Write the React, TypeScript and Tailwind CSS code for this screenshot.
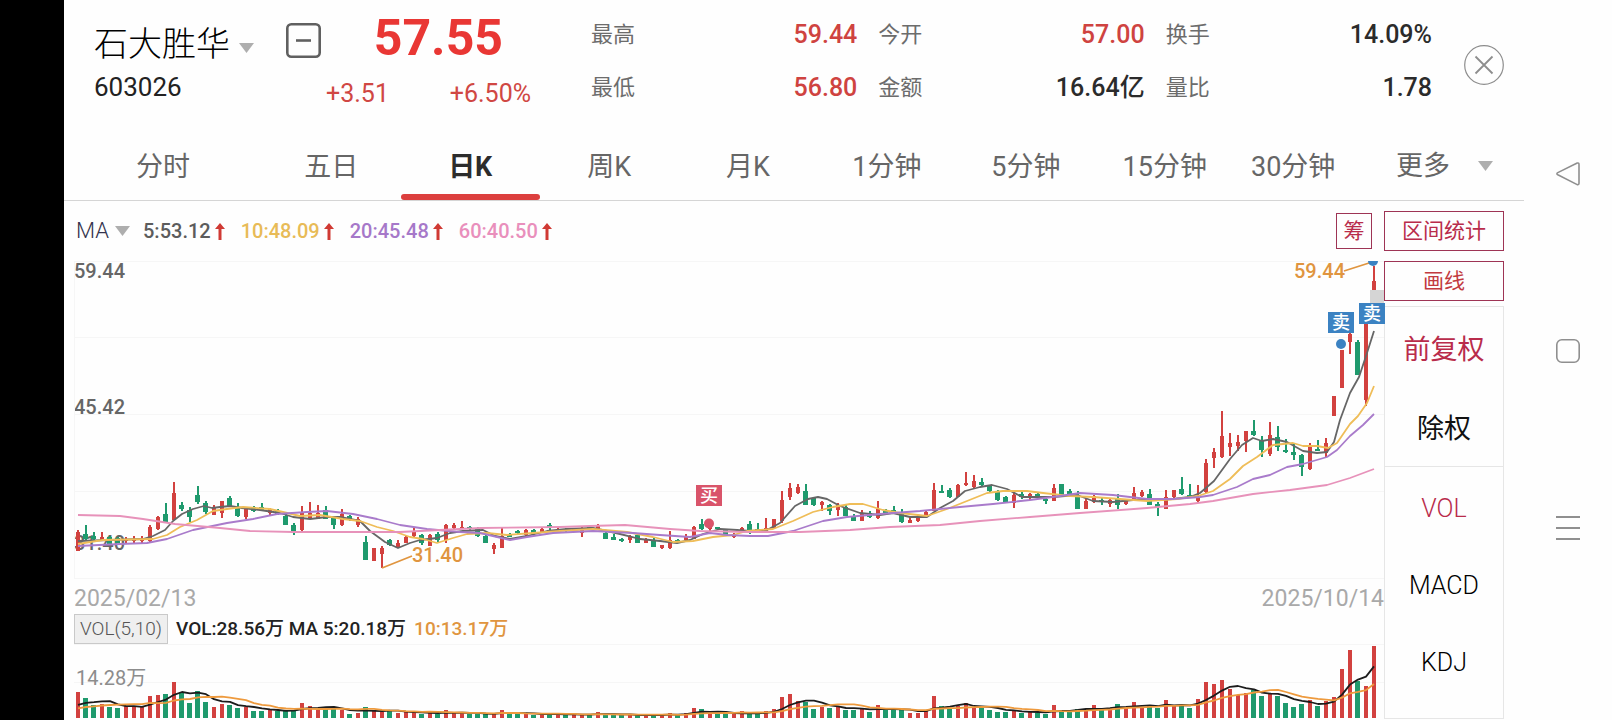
import clsx from "clsx";

type Candle = [string, number, number, number, number, number];

// colour, high, body top, body bottom, low, volume
const candles: Candle[] = [
  ["r", 530, 532, 551, 551, 26], ["g", 525, 534, 539, 540, 20], ["g", 532, 536, 539, 541, 13], ["r", 532, 537, 541, 541, 14],
  ["g", 536, 537, 544, 544, 11], ["g", 537, 538, 543, 543, 10], ["r", 537, 539, 541, 543, 12], ["r", 536, 539, 540, 543, 12],
  ["r", 536, 539, 541, 543, 11], ["r", 525, 527, 541, 542, 22], ["r", 516, 517, 529, 530, 23], ["g", 503, 514, 522, 522, 24],
  ["r", 482, 493, 520, 520, 36], ["g", 502, 505, 509, 511, 25], ["g", 507, 510, 517, 522, 15], ["g", 486, 495, 502, 504, 27],
  ["g", 501, 503, 512, 514, 16], ["r", 505, 508, 515, 515, 11], ["r", 501, 501, 513, 518, 14], ["g", 496, 498, 506, 507, 13],
  ["g", 503, 507, 516, 517, 10], ["r", 508, 509, 517, 519, 11], ["g", 506, 507, 511, 512, 7], ["g", 503, 507, 510, 511, 7],
  ["r", 508, 509, 513, 516, 8], ["g", 509, 511, 514, 515, 7], ["g", 514, 516, 525, 525, 7], ["g", 523, 525, 531, 535, 8],
  ["r", 506, 513, 530, 531, 15], ["r", 502, 513, 518, 518, 12], ["r", 505, 513, 519, 519, 8], ["g", 506, 510, 519, 519, 11],
  ["g", 517, 518, 525, 529, 9], ["r", 509, 514, 525, 526, 8], ["g", 515, 516, 519, 521, 4], ["r", 517, 519, 525, 527, 5],
  ["g", 536, 542, 560, 560, 11], ["r", 548, 548, 561, 561, 8], ["r", 546, 548, 554, 568, 6], ["g", 539, 540, 545, 546, 7],
  ["r", 540, 543, 547, 548, 5], ["r", 536, 537, 543, 543, 6], ["r", 528, 531, 536, 537, 6], ["g", 534, 535, 543, 545, 4],
  ["r", 534, 535, 546, 546, 5], ["g", 532, 534, 540, 542, 4], ["r", 524, 525, 540, 543, 8], ["r", 523, 525, 528, 529, 5],
  ["r", 521, 527, 529, 529, 5], ["g", 526, 527, 529, 531, 4], ["g", 527, 529, 536, 537, 4], ["g", 533, 536, 543, 543, 4],
  ["r", 543, 545, 549, 554, 4], ["r", 528, 536, 548, 548, 8], ["g", 533, 534, 537, 537, 4], ["g", 530, 531, 533, 534, 4],
  ["r", 529, 530, 535, 536, 4], ["g", 529, 530, 533, 535, 3], ["r", 528, 529, 533, 533, 5], ["g", 523, 525, 527, 530, 3],
  ["r", 528, 529, 531, 532, 4], ["g", 528, 529, 531, 532, 3], ["r", 528, 529, 531, 531, 3], ["r", 527, 529, 533, 537, 4],
  ["g", 527, 527, 529, 530, 3], ["r", 524, 526, 529, 529, 6], ["g", 531, 533, 539, 539, 3], ["g", 534, 537, 540, 540, 3],
  ["g", 538, 539, 541, 542, 3], ["r", 535, 536, 540, 543, 3], ["g", 534, 535, 543, 543, 3], ["r", 538, 539, 543, 543, 3],
  ["g", 537, 540, 547, 547, 3], ["r", 545, 545, 548, 549, 3], ["r", 531, 540, 548, 549, 5], ["g", 539, 540, 542, 542, 3],
  ["r", 534, 537, 540, 541, 5], ["r", 526, 527, 539, 539, 10], ["g", 519, 524, 529, 530, 9], ["r", 526, 527, 529, 531, 4],
  ["g", 527, 527, 529, 530, 4], ["g", 529, 530, 535, 535, 4], ["r", 533, 535, 537, 538, 4], ["r", 527, 528, 532, 533, 7],
  ["g", 521, 524, 531, 534, 4], ["g", 523, 529, 531, 532, 4], ["r", 518, 528, 531, 532, 7], ["r", 519, 519, 528, 529, 9],
  ["r", 491, 500, 521, 523, 21], ["r", 483, 488, 497, 500, 24], ["r", 484, 487, 493, 494, 17], ["g", 484, 491, 505, 505, 16],
  ["g", 497, 498, 505, 506, 9], ["r", 501, 502, 505, 511, 11], ["g", 504, 505, 511, 515, 10], ["r", 503, 505, 510, 516, 12],
  ["g", 505, 507, 516, 516, 8], ["g", 514, 517, 521, 521, 8], ["r", 510, 513, 521, 521, 9], ["g", 511, 513, 517, 518, 6],
  ["r", 501, 509, 518, 519, 13], ["g", 509, 510, 513, 514, 8], ["g", 506, 510, 513, 513, 8], ["g", 509, 513, 522, 523, 8],
  ["r", 517, 520, 523, 523, 5], ["r", 515, 517, 521, 522, 5], ["r", 511, 512, 516, 517, 8], ["r", 483, 490, 511, 511, 22],
  ["g", 485, 491, 492, 493, 12], ["g", 488, 490, 497, 498, 10], ["r", 484, 485, 497, 497, 12], ["r", 472, 483, 485, 486, 15],
  ["r", 475, 481, 487, 488, 11], ["g", 478, 482, 485, 487, 10], ["g", 485, 485, 491, 492, 8], ["g", 490, 492, 500, 501, 6],
  ["g", 496, 497, 502, 502, 6], ["r", 493, 495, 503, 508, 8], ["g", 490, 494, 497, 499, 5], ["r", 493, 494, 498, 500, 6],
  ["g", 492, 494, 498, 499, 5], ["g", 497, 499, 501, 504, 4], ["r", 484, 488, 501, 501, 13], ["g", 484, 484, 495, 495, 7],
  ["g", 489, 491, 494, 495, 7], ["g", 491, 495, 509, 509, 9], ["r", 499, 501, 509, 509, 9], ["r", 495, 496, 502, 503, 13],
  ["g", 498, 500, 502, 505, 8], ["r", 498, 500, 504, 507, 10], ["g", 494, 499, 505, 509, 14], ["r", 499, 501, 504, 505, 10],
  ["r", 487, 493, 499, 499, 16], ["r", 490, 492, 496, 497, 11], ["g", 489, 494, 505, 505, 12], ["g", 502, 504, 507, 516, 10],
  ["r", 490, 497, 509, 509, 18], ["r", 490, 490, 497, 498, 12], ["g", 477, 489, 494, 495, 13], ["g", 484, 495, 497, 497, 10],
  ["r", 485, 497, 501, 502, 19], ["r", 459, 463, 492, 493, 36], ["r", 448, 452, 458, 468, 34], ["r", 411, 436, 457, 458, 38],
  ["r", 433, 443, 447, 456, 29], ["r", 435, 442, 446, 451, 23], ["r", 431, 431, 441, 452, 25], ["g", 420, 431, 435, 436, 28],
  ["g", 436, 440, 450, 457, 22], ["r", 422, 435, 454, 456, 24], ["g", 426, 437, 447, 451, 22], ["g", 439, 450, 452, 453, 15],
  ["g", 443, 452, 455, 460, 11], ["g", 454, 455, 467, 476, 14], ["r", 443, 445, 469, 470, 18], ["g", 440, 449, 451, 451, 12],
  ["r", 438, 443, 453, 457, 17], ["r", 396, 396, 416, 416, 21], ["r", 350, 350, 388, 388, 49], ["r", 333, 334, 342, 354, 68],
  ["g", 340, 342, 375, 375, 37], ["r", 320, 324, 400, 406, 32], ["r", 266, 281, 290, 290, 72],
];

const ma5 =
  "78,541 110,540 143,539 153,536 165,530 173,521 182,514 193,509 204,506 212,508 220,507 230,506 242,508 260,510 280,513 293,517 310,519 327,517 340,517 360,521 370,531 385,542 398,548 410,543 420,540 437,538 450,533 463,531 483,530 495,536 510,539 527,536 547,531 567,529 593,528 607,531 620,534 640,539 660,541 677,543 690,540 703,534 720,529 737,530 750,531 767,530 780,523 795,506 808,499 818,497 827,499 840,506 860,513 880,515 893,513 910,517 927,517 940,508 953,501 965,491 980,487 992,485 1007,489 1022,497 1033,497 1053,497 1077,495 1093,501 1113,502 1133,500 1153,500 1173,499 1190,497 1200,493 1214,481 1230,459 1242,445 1253,438 1262,441 1273,439 1287,442 1303,451 1317,453 1327,452 1334,442 1340,420 1350,393 1359,377 1367,353 1374,331";
const ma10 =
  "78,544 103,540 153,539 167,535 180,527 197,520 213,511 227,509 243,507 270,509 283,512 300,516 320,515 343,519 360,521 377,527 393,531 410,537 423,539 437,543 453,538 467,534 487,533 507,535 533,533 560,531 593,529 627,532 653,537 673,542 693,541 713,537 733,535 747,531 773,529 793,521 813,512 833,507 850,504 863,504 883,510 900,513 927,516 947,509 967,501 987,493 1003,491 1027,491 1043,493 1070,496 1093,497 1120,499 1147,501 1177,499 1198,496 1213,491 1230,479 1243,466 1257,457 1273,445 1293,443 1303,446 1317,446 1328,448 1337,443 1350,424 1358,416 1367,403 1374,386";
const ma20 =
  "78,546 120,544 147,543 167,539 193,530 227,523 253,519 277,514 307,512 327,511 353,514 377,519 400,525 427,529 460,532 480,533 510,540 527,537 553,533 593,531 633,533 660,535 690,537 710,533 727,535 750,536 768,536 793,531 823,521 847,517 880,514 920,511 960,507 993,504 1030,500 1060,496 1080,493 1113,495 1147,499 1173,499 1200,497 1213,495 1237,487 1253,479 1270,475 1287,467 1303,464 1327,457 1337,450 1350,436 1363,425 1374,414";
const ma60 =
  "78,515 120,516 143,519 175,524 220,528 250,531 293,532 400,532 440,530 480,528 560,527 590,526 625,525 670,529 700,531 750,532 800,532 850,530 890,527 940,525 980,521 1030,517 1080,513 1147,508 1190,504 1213,501 1253,494 1290,490 1327,485 1350,478 1374,469";

const averages = [
  { label: "5:53.12", className: "text-[#5c5c5c]" },
  { label: "10:48.09", className: "text-[#e8bb57]" },
  { label: "20:45.48", className: "text-[#a678c9]" },
  { label: "60:40.50", className: "text-[#e98fbc]" },
];

const stats = [
  { label: "最高", value: "59.44", up: true },
  { label: "今开", value: "57.00", up: true },
  { label: "换手", value: "14.09%", up: false },
  { label: "最低", value: "56.80", up: true },
  { label: "金额", value: "16.64亿", up: false },
  { label: "量比", value: "1.78", up: false },
];

const tabs = ["分时", "五日", "日K", "周K", "月K", "1分钟", "5分钟", "15分钟", "30分钟"];

const RED = "#d2413f";
const GREEN = "#1f9a6d";

const candleX = (i: number) => 78 + i * 8;
const color = (kind: string) => (kind === "r" ? RED : GREEN);

// volumes of the sessions before the first visible one
const earlier = [6, 6, 6, 6, 6, 10, 10, 10, 10];
const volumes = [...earlier, ...candles.map((c) => c[5])];

const volumeAverage = (days: number) =>
  candles
    .map((_, i) => {
      const end = i + earlier.length + 1;
      const sum = volumes.slice(end - days, end).reduce((a, b) => a + b, 0);
      return `${candleX(i)},${718 - sum / days}`;
    })
    .join(" ");

const Caret = () => (
  <svg viewBox="0 0 15 10" className="w-[15px] h-[10px] pointer-events-none" aria-hidden="true">
    <path d="M0 0H15L7.5 10Z" fill="#aeaeae" />
  </svg>
);

const UpArrow = () => (
  <svg viewBox="0 0 10 17" className="w-[10px] h-[17px]" aria-hidden="true">
    <path d="M5 0L10 6H6.5V17H3.5V6H0Z" fill="#d03a34" />
  </svg>
);

const Header = () => (
  <header className="flex h-[132px] pl-[30px] pr-[20px]">
    <div className="w-[192px] pt-[20px]">
      <div className="flex items-center gap-[9px] h-12">
        <select aria-label="股票" className="appearance-none text-[34px] leading-[48px] font-light text-black">
          <option>石大胜华</option>
        </select>
        <span className="pt-2">
          <Caret />
        </span>
      </div>
      <p className="text-[26px] leading-[38px] text-[#222]">603026</p>
    </div>
    <button aria-label="删除自选" className="mt-[23px] w-[35px] h-[35px] shrink-0">
      <svg viewBox="0 0 35 35" fill="none" stroke="#606060">
        <rect x="1.3" y="1.3" width="32.4" height="32.4" rx="4" strokeWidth="2.6" />
        <path d="M10 17.5H25" strokeWidth="2.6" />
      </svg>
    </button>
    <div className="ml-[5px] mr-[60px] w-[205px] pt-[10px] shrink-0">
      <p className="text-[50px] leading-[56px] font-bold text-[#e93734] text-right pr-[28px]">57.55</p>
      <p className="flex justify-between text-[25px] leading-[56px] text-[#d04743]">
        <span>+3.51</span>
        <span>+6.50%</span>
      </p>
    </div>
    <dl className="flex-1 grid grid-cols-3 gap-x-[21px] pt-2 content-start">
      {stats.map((item) => (
        <div key={item.label} className="flex justify-between items-center h-[53px]">
          <dt className="text-[22px] text-[#6c6c6c]">{item.label}</dt>
          <dd className={clsx("text-[25px] font-medium", item.up ? "text-[#cf4340]" : "text-[#2b2b2b]")}>{item.value}</dd>
        </div>
      ))}
    </dl>
    <button aria-label="关闭" className="ml-[32px] mt-[45px] w-10 h-10 shrink-0">
      <svg viewBox="0 0 40 40" fill="none" stroke="#8d8d8d">
        <circle cx="20" cy="20" r="19.3" strokeWidth="1.2" />
        <path d="M11.5 11.5L28.5 28.5M28.5 11.5L11.5 28.5" strokeWidth="1.8" />
      </svg>
    </button>
  </header>
);

const Tabs = () => (
  <nav className="grid grid-cols-[198fr_repeat(7,139fr)_118fr_172fr] h-[69px] border-b border-[#d5d5d5] text-[27px] text-[#666]">
    {tabs.map((tab) => (
      <button key={tab} className={clsx("flex flex-col items-center", tab === "日K" && "font-bold text-[#2c2c2c]")}>
        <span className="h-[62px] leading-[70px] whitespace-nowrap">{tab}</span>
        {tab === "日K" && <span className="h-[6px] w-full rounded-full bg-[#dc3f3e]" />}
      </button>
    ))}
    <div className="flex items-center gap-[28px] pl-[44px]">
      <select aria-label="更多周期" className="appearance-none">
        <option>更多</option>
      </select>
      <Caret />
    </div>
  </nav>
);

const Marker = ({ x, y, text, buy = false }: { x: number; y: number; text: string; buy?: boolean }) => (
  <span
    className={clsx("absolute h-[21px] w-[26px] text-center text-[18px] leading-[21px] text-white", buy ? "bg-[#d9546a]" : "bg-[#3b82c2]")}
    style={{ left: `${((x - 74) / 1310) * 100}%`, top: y - 261 }}
  >
    {text}
  </span>
);

const PriceChart = () => (
  <div className="relative h-[318px] text-xl leading-6 font-medium">
    <span className="absolute left-0 -top-[2px] text-[#666]">59.44</span>
    <span className="absolute left-0 top-[134px] text-[#666]">45.42</span>
    <span className="absolute left-0 top-[270px] text-[#666]">31.40</span>
    <svg viewBox="74 261 1310 318" preserveAspectRatio="none" className="absolute inset-0 w-full h-full" fill="none" role="img" aria-label="日K线">
      <path d="M74 261.5H1384M74 337.5H1384M74 414.5H1384M74 491.5H1384M74 578.5H1384M74.5 261V579" stroke="#f6f6f6" />
      {candles.map(([kind, high, top, bottom, low], i) => (
        <g key={i} fill={color(kind)}>
          <rect x={candleX(i) - 1} y={high} width="2" height={low - high} />
          <rect x={candleX(i) - (kind === "r" ? 2 : 3)} y={top} width={kind === "r" ? 4 : 5} height={Math.max(bottom - top, 2)} />
        </g>
      ))}
      <g strokeWidth="1.8" strokeLinejoin="round">
        <polyline points={ma5} stroke="#666" />
        <polyline points={ma10} stroke="#efbd58" />
        <polyline points={ma20} stroke="#a97bcb" />
        <polyline points={ma60} stroke="#e792ba" />
        <path d="M382 568L412 556M1344 271L1369 263" stroke="#e0953f" />
      </g>
      <rect x="1370" y="290" width="14" height="14" fill="#d5d5d5" />
      <circle cx="1373" cy="261" r="5" fill="#3b82c2" />
      <circle cx="1341" cy="344" r="5" fill="#3b82c2" />
      <circle cx="709" cy="523.5" r="5" fill="#d9546a" />
    </svg>
    <span className="absolute left-[338px] top-[282px] text-[#e0953f]">31.40</span>
    <span className="absolute right-[39px] -top-[2px] text-[#e0953f]">59.44</span>
    <Marker x={696} y={485} text="买" buy />
    <Marker x={1328} y={312} text="卖" />
    <Marker x={1359} y={303} text="卖" />
  </div>
);

const VolumeChart = () => (
  <div className="relative h-[75px]">
    <svg viewBox="74 644 1310 75" preserveAspectRatio="none" className="absolute inset-0 w-full h-full" fill="none" role="img" aria-label="成交量">
      <path d="M74 644.5H1384M74 682.5H1384" stroke="#f6f6f6" />
      {candles.map(([kind, , , , , volume], i) => (
        <rect key={i} x={candleX(i) - (kind === "r" ? 2 : 3)} y={718 - volume} width={kind === "r" ? 4 : 5} height={volume} fill={color(kind)} />
      ))}
      <g strokeWidth="1.8" strokeLinejoin="round">
        <polyline points={volumeAverage(5)} stroke="#1c1c1c" />
        <polyline points={volumeAverage(10)} stroke="#ee9a3d" />
      </g>
    </svg>
    <span className="absolute left-[2px] top-[22px] text-xl leading-6 text-[#8c8c8c]">14.28万</span>
  </div>
);

const ChartArea = () => (
  <section className="flex-1 min-w-0 pl-[10px]">
    <div className="flex items-center h-[60px] pr-[12px]">
      <select aria-label="指标" className="appearance-none w-[41px] pl-[2px] text-[22px] leading-7 font-light text-[#33334d]">
        <option>MA</option>
      </select>
      <Caret />
      <ul className="flex gap-[16px] ml-[13px] text-xl leading-7 font-medium">
        {averages.map((item) => (
          <li key={item.label} className={clsx("flex items-center gap-1", item.className)}>
            {item.label}
            <UpArrow />
          </li>
        ))}
      </ul>
      <button className="ml-auto w-9 h-9 border border-[#9e3455] text-[21px] leading-[34px] text-[#b92c4b]">筹</button>
    </div>
    <PriceChart />
    <div className="flex items-center justify-between h-[35px] text-[23px] text-[#a9a9a9] pt-[5px]">
      <time>2025/02/13</time>
      <time>2025/10/14</time>
    </div>
    <div className="flex items-center gap-2 h-[30px] text-[19px] font-medium text-[#222]">
      <button className="w-[94px] h-[30px] border border-[#c9c9c9] bg-[#efefef] font-light text-[#555]">VOL(5,10)</button>
      <span>VOL:28.56万 MA 5:20.18万</span>
      <span className="text-[#e0953f]">10:13.17万</span>
    </div>
    <VolumeChart />
  </section>
);

const Sidebar = () => (
  <aside className="w-[120px] mr-[20px] pt-[10px] shrink-0">
    <div className="flex flex-col gap-[10px] text-[21px]">
      <button className="h-10 pt-[2px] border border-[#9e3455] text-[#b92c4b]">区间统计</button>
      <button className="h-10 pt-[2px] border border-[#9e3455] text-[#c23a3f]">画线</button>
    </div>
    <div className="flex flex-col mt-[5px] pt-[4px] border border-[#e6e6e6] text-[27px]">
      <button className="h-[79px] text-[#b92c4b]">前复权</button>
      <button className="h-[76px] pt-[2px] text-[#111]">除权</button>
    </div>
    <div className="flex flex-col pt-[3px] pb-[17px] border border-t-0 border-[#e6e6e6] text-[25px] font-light text-black">
      <button className="h-[77px] text-[#b92c4b]">VOL</button>
      <button className="h-[77px]">MACD</button>
      <button className="h-[77px]">KDJ</button>
    </div>
  </aside>
);

const SystemBar = () => (
  <nav className="w-[88px] shrink-0 pt-[162px] flex flex-col items-center gap-[153px]">
    <button aria-label="返回" className="w-6 h-6">
      <svg viewBox="0 0 24 24" fill="none" stroke="#8f8f8f" strokeWidth="1.6" strokeLinejoin="round">
        <path d="M21.2 1L1.8 10.6Q0 11.7 1.8 12.8L21.2 22.6Q23 23 23 21.2V2.4Q23 .6 21.2 1Z" />
      </svg>
    </button>
    <button aria-label="主页" className="w-6 h-6">
      <svg viewBox="0 0 24 24" fill="none" stroke="#8f8f8f" strokeWidth="1.6">
        <rect x=".8" y=".8" width="22.4" height="22.4" rx="5" />
      </svg>
    </button>
    <button aria-label="最近任务" className="w-6 h-6">
      <svg viewBox="0 0 24 24" fill="none" stroke="#8f8f8f" strokeWidth="1.8">
        <path d="M0 1H24M0 12H24M0 23H24" />
      </svg>
    </button>
  </nav>
);

export default function App() {
  return (
    <div className="flex min-h-screen bg-[#fefefe] font-[Roboto,'Noto_Sans_CJK_SC',sans-serif]">
      <div className="w-16 shrink-0 bg-black" />
      <main className="flex-1 min-w-0">
        <Header />
        <Tabs />
        <div className="flex">
          <ChartArea />
          <Sidebar />
        </div>
      </main>
      <SystemBar />
    </div>
  );
}
